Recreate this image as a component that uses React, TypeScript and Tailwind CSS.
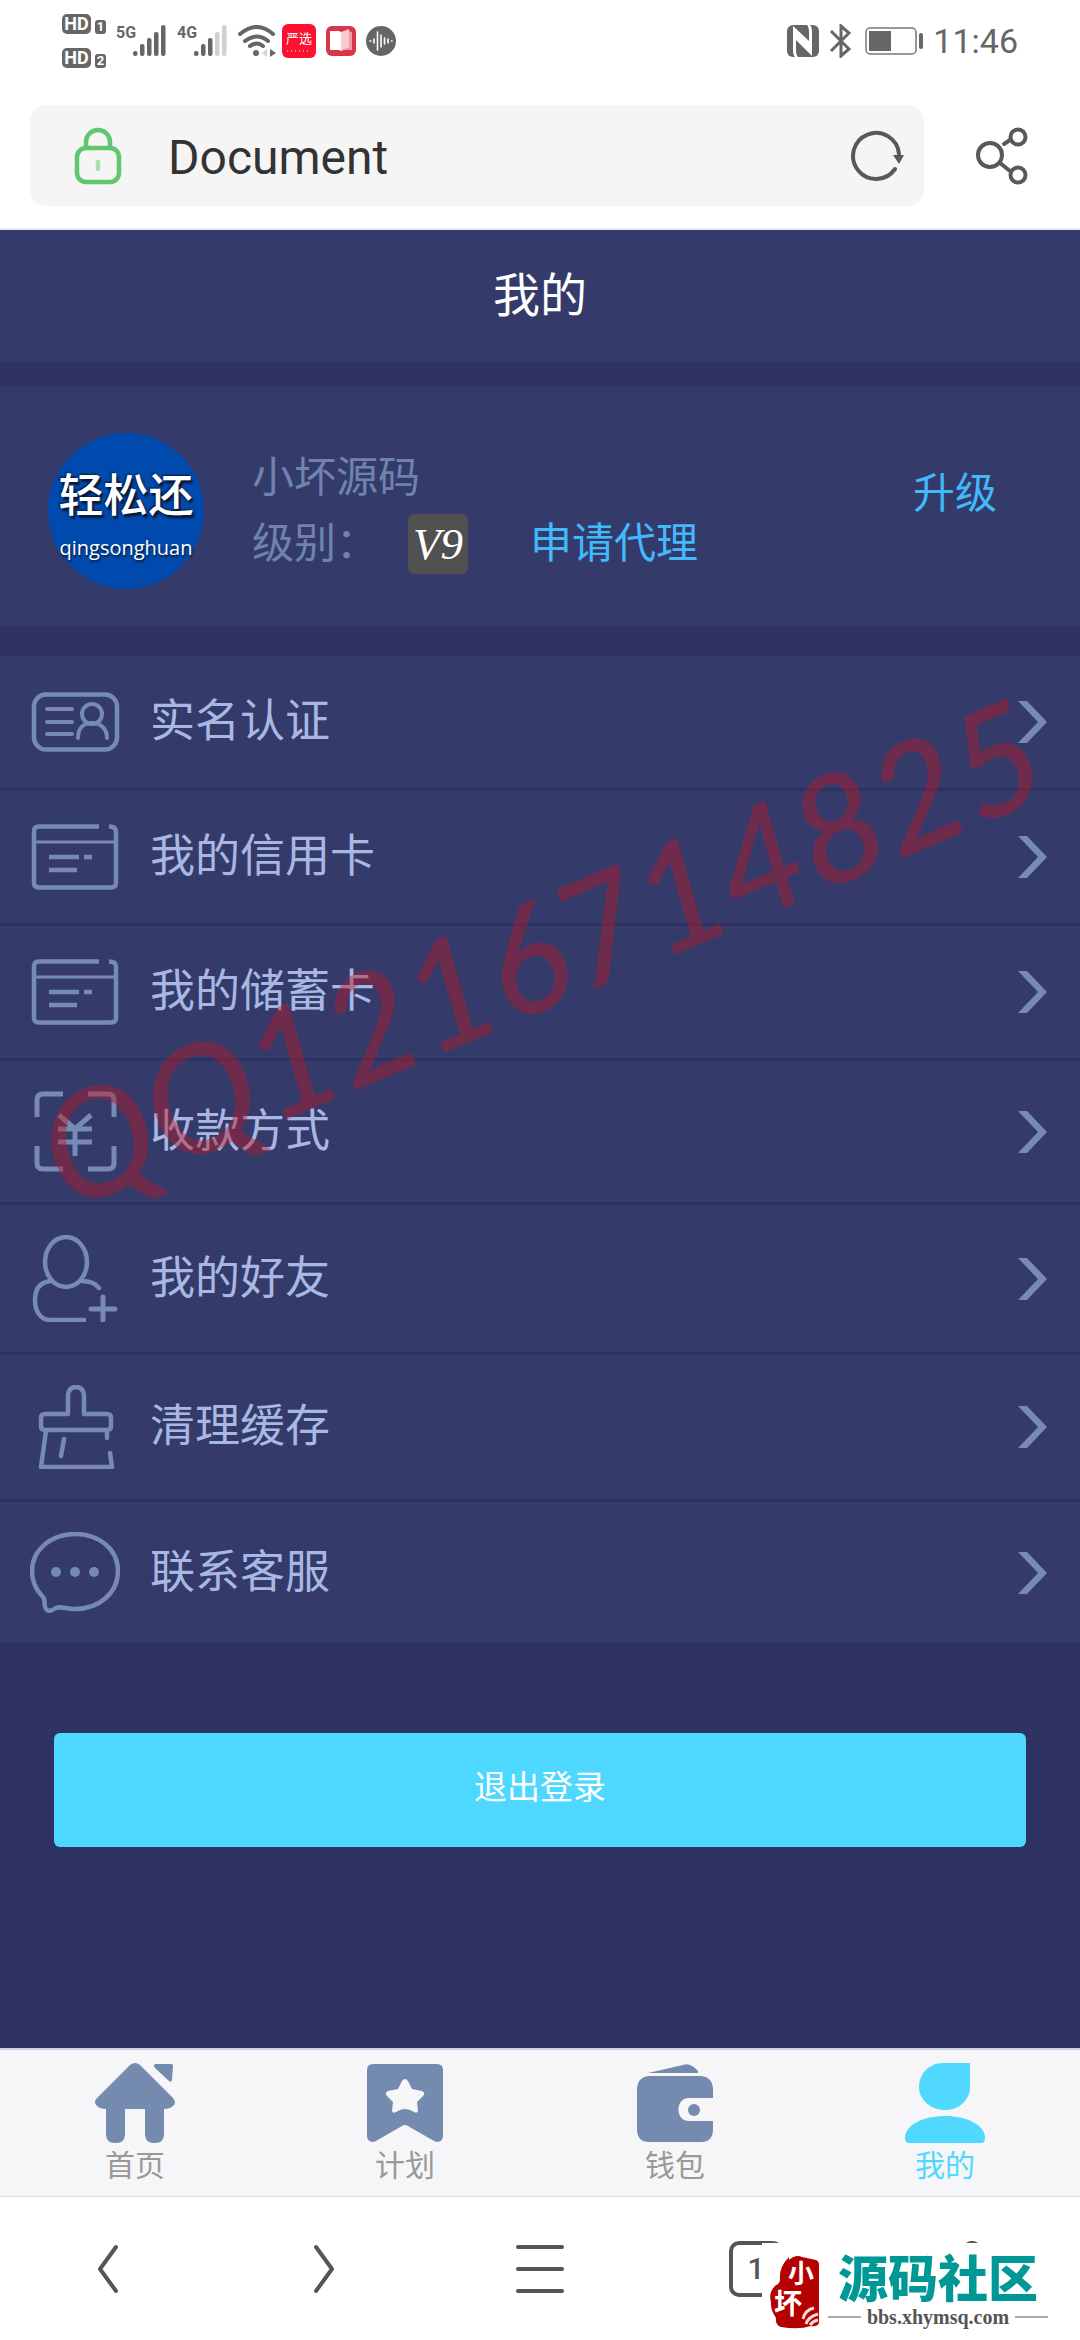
import type { ReactNode } from "react";

type IconProps = {
  height: number;
  children: ReactNode;
};

const MenuIcon = ({ height, children }: IconProps) => (
  <svg
    width="90"
    height={height}
    viewBox={`0 0 90 ${height}`}
    fill="none"
    stroke="#768ab3"
    strokeWidth="4.500"
    strokeLinecap="round"
    strokeLinejoin="round"
    aria-hidden="true"
  >
    {children}
  </svg>
);

const IdCardIcon = () => (
  <MenuIcon height={60}>
    <rect x="4" y="2.500" width="83" height="55" rx="12" />
    <path d="M17 17h25M17 30h25M17 42h25M48 46c0-10 6-15 14-15s15 5 15 15" strokeWidth="4" />
    <circle cx="62" cy="22" r="10" strokeWidth="4" />
  </MenuIcon>
);

const BankCardIcon = () => (
  <MenuIcon height={66}>
    <path
      d="M69 2.500H9q-5 0-5 5v51q0 5 5 5h72q5 0 5-5V7.500q0-5-7-5M19 33h30M54 33h8M19 46h28"
      strokeLinecap="butt"
    />
    <path d="M4 18h82" strokeWidth="3" />
  </MenuIcon>
);

const ReceiveIcon = () => (
  <MenuIcon height={81}>
    <path
      d="M33 3H13q-6 0-6 6v17M58 3h20q6 0 6 6v17M7 55v17q0 6 6 6h20M58 78h20q6 0 6-6V55M29 24l16 14 16-14M28 38h34M28 51h34M45 38v27"
      strokeLinecap="butt"
      strokeWidth="5"
    />
  </MenuIcon>
);

const FriendsIcon = () => (
  <MenuIcon height={87}>
    <ellipse cx="36" cy="27" rx="21" ry="25" />
    <path d="M21 46C9 47 5 55 5 65C5 77 11 85 20 85H54M52 46q12 0 17 7" />
    <path d="M61 74h24M73 62v23" strokeWidth="5" />
  </MenuIcon>
);

const BrushIcon = () => (
  <MenuIcon height={84}>
    <path d="M38 29V10q1-8 8-8t8 8v19h23q4 0 4 4v8q0 4-4 4H15q-4 0-4-4v-8q0-4 4-4zM16 46l-5 36h71l-2-14M77 46v7M34 54l-3 17" />
  </MenuIcon>
);

const ChatIcon = () => (
  <MenuIcon height={81}>
    <path d="M45 2C21 2 2 18 2 39c0 12 5 20 11 26c3 3 0 8 3 12c2 3 5 2 8 0c6-4 11 0 21 0c24 0 43-16 43-38S69 2 45 2z" />
    <g fill="#768ab3" stroke="none">
      <circle cx="26" cy="40" r="5" />
      <circle cx="45" cy="40" r="5" />
      <circle cx="64" cy="40" r="5" />
    </g>
  </MenuIcon>
);

const HomeTabIcon = () => (
  <svg width="80" height="80" viewBox="0 0 80 80" fill="currentColor" aria-hidden="true">
    <path d="M35 2q5-4 10 0l33 33q4 5 0 8-3 3-9 3v25q0 9-9 9h-1q-9 0-9-9V46H30v25q0 9-9 9h-1q-9 0-9-9V46q-6 0-9-3-4-4 0-8z" />
    <path d="M60 1h16q2 0 2 2l-1 14q-1 3-3 1L60 5q-2-3 0-4z" />
  </svg>
);

const PlanTabIcon = () => (
  <svg width="80" height="80" viewBox="0 0 80 80" fill="currentColor" aria-hidden="true">
    <path
      fillRule="evenodd"
      d="M8 1h64q6 0 6 6v67q-2 7-9 4L43 63q-3-2-6 0L11 78q-7 3-9-4V7q0-6 6-6zM37 18l-4 8-10 2q-4 2-1 5l6 6-1 9q1 3 4 1 9-6 18 0 3 2 4-1l-1-9 6-6q3-3-1-5l-10-2-4-8q-3-4-6 0z"
    />
  </svg>
);

const WalletTabIcon = () => (
  <svg width="80" height="80" viewBox="0 0 80 80" fill="currentColor" aria-hidden="true">
    <path d="M13 10L48 2q7-3 15 6v2z" />
    <path d="M14 13h52q12 1 12 14v8H54c-14 0-14 23 0 23h24v8q0 13-12 13H14Q2 79 2 66V27Q2 14 14 13z" />
    <circle cx="59" cy="47" r="6" />
  </svg>
);

const MineTabIcon = () => (
  <svg width="80" height="80" viewBox="0 0 80 80" fill="currentColor" aria-hidden="true">
    <path d="M38 0h27v24c0 13-11 23-25 23S14 37 14 24 24 0 38 0z" />
    <path d="M0 75c0-13 18-22 40-22s40 9 40 22q0 5-4 5H4q-4 0-4-5z" />
  </svg>
);

const menu = [
  { label: "实名认证", icon: <IdCardIcon /> },
  { label: "我的信用卡", icon: <BankCardIcon /> },
  { label: "我的储蓄卡", icon: <BankCardIcon /> },
  { label: "收款方式", icon: <ReceiveIcon /> },
  { label: "我的好友", icon: <FriendsIcon /> },
  { label: "清理缓存", icon: <BrushIcon /> },
  { label: "联系客服", icon: <ChatIcon /> },
];

const tabs = [
  { label: "首页", icon: <HomeTabIcon />, active: false },
  { label: "计划", icon: <PlanTabIcon />, active: false },
  { label: "钱包", icon: <WalletTabIcon />, active: false },
  { label: "我的", icon: <MineTabIcon />, active: true },
];

const SimBadge = ({ sim }: { sim: string }) => (
  <div className="flex items-end gap-1 font-bold text-white">
    <span className="w-[29px] h-5 rounded-[5px] bg-[#666] text-[18px] leading-5 text-center">
      HD
    </span>
    <span className="w-[11px] h-3.5 rounded-[3px] bg-[#666] text-[13px] leading-[14px] text-center">
      {sim}
    </span>
  </div>
);

const Signal = ({ network, bars }: { network: string; bars: number }) => (
  <div className="flex items-start h-8">
    <span className="w-[17px] text-[16px] leading-4 font-bold">{network}</span>
    <svg width="34" height="32" viewBox="0 0 34 32" aria-hidden="true">
      {[5, 12, 18, 24, 31].map((height, i) => (
        <rect
          key={height}
          x={i * 7}
          y={31 - height}
          width="4.500"
          height={height}
          rx="2"
          fill={i < bars ? "#666" : "#d0d0d0"}
        />
      ))}
    </svg>
  </div>
);

const StatusBar = () => (
  <div className="flex justify-between pt-3.5 pb-[37px] px-[62px] text-[#666]">
    <div className="flex items-center gap-2.5">
      <div className="flex flex-col gap-3.5">
        <SimBadge sim="1" />
        <SimBadge sim="2" />
      </div>
      <Signal network="5G" bars={5} />
      <Signal network="4G" bars={3} />
      <div className="flex items-center gap-1.5">
        <svg width="38" height="32" viewBox="0 0 38 32" fill="none" stroke="#666" strokeWidth="4" strokeLinecap="round" aria-hidden="true">
          <path d="M2 9q17-14 33 0M7 16q12-9 23 0M12 21q7-5 13 0" />
          <circle cx="18" cy="28" r="3" fill="#666" stroke="none" />
          <path d="M32 24l6 4-6 4z" fill="#666" stroke="none" />
          <path d="M29 24l-5 4 5 4z" fill="#d0d0d0" stroke="none" />
        </svg>
        <div className="w-[34px] h-[34px] rounded-md bg-[#fb1231] text-white text-[13px] leading-4 text-center flex flex-col items-center pt-[7px] gap-[3px]">
          严选
          <svg width="24" height="3" aria-hidden="true">
            <path d="M0 1h24" stroke="#fff" strokeWidth="1" strokeDasharray="1 3" />
          </svg>
        </div>
      </div>
      <svg width="30" height="30" viewBox="0 0 30 30" aria-hidden="true">
        <rect width="30" height="30" rx="6" fill="#d9364a" />
        <path d="M4 5h9l2 1v19l-2-1H4z" fill="#fff" />
        <path d="M15 6l8-3v19l-8 3z" fill="#f9ccd2" />
        <path d="M23 5l3 1v18H15l8-2z" fill="#f19ba6" />
      </svg>
      <svg width="30" height="30" viewBox="0 0 30 30" aria-hidden="true">
        <circle cx="15" cy="15" r="15" fill="#666" />
        <path
          d="M4 15h1M8 13v4M11.500 6v18M15 9v12M18.500 12v6M22 13v4M25.500 15h.5"
          stroke="#fff"
          strokeWidth="1.600"
          strokeLinecap="round"
        />
      </svg>
    </div>
    <div className="flex items-center gap-2.5">
      <svg width="32" height="32" viewBox="0 0 32 32" aria-hidden="true">
        <rect width="32" height="32" rx="6" fill="#666" />
        <path d="M8 32Q6 30 6 25V1L22 16V7Q22 2 20 0h3q2 2 2 7v24L9 15v10q0 5 2 7z" fill="#fff" />
      </svg>
      <svg width="22" height="34" viewBox="0 0 22 34" fill="none" stroke="#666" strokeWidth="3" aria-hidden="true">
        <path d="M2 7l18 18-8 7V2l8 7L2 27" />
      </svg>
      <svg width="58" height="28" viewBox="0 0 58 28" className="ml-1" aria-hidden="true">
        <rect x="1" y="1" width="50" height="26" rx="4" fill="none" stroke="#777" strokeWidth="1.500" />
        <rect x="4" y="4" width="22" height="20" fill="#666" />
        <rect x="54" y="6" width="4" height="16" rx="2" fill="#666" />
      </svg>
      <time className="text-[34px] leading-10">11:46</time>
    </div>
  </div>
);

const AddressBar = () => (
  <div className="flex items-center gap-[52px] pl-[30px] pr-[52px] pb-[22px] border-b-2 border-[#e8edf5]">
    <div className="flex flex-1 items-center h-[101px] rounded-2xl bg-[#f5f5f5] pl-11 pr-[18px]">
      <svg width="48" height="58" viewBox="0 0 48 58" fill="none" stroke="#62c66e" strokeWidth="4.500" aria-hidden="true">
        <rect x="3" y="21" width="42" height="34" rx="9" />
        <path d="M12 21V15a12 12 0 0 1 24 0v6" />
        <path d="M24 35v7" stroke="#a9dfb0" strokeLinecap="round" />
      </svg>
      <input
        type="text"
        aria-label="地址栏"
        defaultValue="Document"
        className="flex-1 min-w-0 ml-[46px] pt-1 bg-transparent text-5xl text-[#333] outline-none"
      />
      <button type="button" aria-label="刷新">
        <svg width="56" height="52" viewBox="0 0 56 52" fill="none" stroke="#595959" strokeWidth="4" strokeLinecap="round" aria-hidden="true">
          <path d="M45 39A23 23 0 1 1 49 24" />
          <path d="M43 25h11l-5 9z" fill="#595959" stroke="none" />
        </svg>
      </button>
    </div>
    <button type="button" aria-label="分享">
      <svg width="52" height="58" viewBox="0 0 52 58" fill="none" stroke="#595959" strokeWidth="4" strokeLinecap="round" aria-hidden="true">
        <circle cx="14" cy="28" r="12" />
        <circle cx="42" cy="10" r="7.500" />
        <circle cx="42" cy="48" r="7.500" />
        <path d="M28 17l6-4M24 36l10 8" />
      </svg>
    </button>
  </div>
);

const Profile = () => (
  <section className="flex items-center gap-12 bg-[#343b6b] pt-[47px] pb-[37px] pl-12 pr-[83px] text-[42px] leading-[66px]">
    <div className="flex flex-col items-center size-[156px] shrink-0 rounded-full bg-[#004aad] pt-9 text-white">
      <span className="text-[45px] leading-[56px] font-medium [text-shadow:2px_3px_2px_#0b1838,-1px_-1px_2px_#0b1838]">
        轻松还
      </span>
      <span className="font-['Open_Sans'] text-xl leading-[46px] [text-shadow:1px_2px_2px_#0b1838]">
        qingsonghuan
      </span>
    </div>
    <div className="flex-1 text-[#7083ae]">
      <p>小坏源码</p>
      <div className="flex items-center">
        <span>级别：</span>
        <span className="ml-[30px] size-[60px] rounded-md bg-[#505050] text-center text-white font-['Liberation_Serif'] italic text-[45px] leading-[60px]">
          V9
        </span>
        <a href="#agent" className="ml-[62px] text-[#41b9fb]">
          申请代理
        </a>
      </div>
    </div>
    <a href="#upgrade" className="self-start mt-7 text-[#41b9fb]">
      升级
    </a>
  </section>
);

const Menu = () => (
  <ul>
    {menu.map((item) => (
      <li key={item.label} className="border-b-3 border-[#2d3262]">
        <a
          href="#menu"
          className="flex items-center gap-[30px] bg-[#343b6b] py-[30px] pl-[30px] pr-[33px] text-[45px] leading-[72px] text-[#a9b8e3]"
        >
          {item.icon}
          <span className="flex-1">{item.label}</span>
          <svg width="29" height="42" viewBox="0 0 29 42" fill="#768ab3" aria-hidden="true">
            <path d="M0 0h9l20 21L9 42H0l20-21z" />
          </svg>
        </a>
      </li>
    ))}
  </ul>
);

const TabBar = () => (
  <nav className="grid grid-cols-4 bg-[#f6f6f9] border-t-2 border-[#cdd0e0] pt-[13px] pb-2">
    {tabs.map((tab) => (
      <a
        key={tab.label}
        href="#tab"
        className={`flex flex-col items-center ${tab.active ? "text-[#50d8ff]" : "text-[#758aaf]"}`}
      >
        {tab.icon}
        <span className={`text-[30px] leading-[45px] ${tab.active ? "text-[#50d8ff]" : "text-[#999]"}`}>
          {tab.label}
        </span>
      </a>
    ))}
  </nav>
);

const SiteMark = () => (
  <div className="absolute top-[46px] right-0 bottom-0 w-[318px] bg-white flex items-start gap-2 pt-3 pl-2">
    <svg width="50" height="74" viewBox="0 0 50 74" aria-hidden="true">
      <path
        d="M19 5q7-6 13-3l14 3q3 1 3 5v58q-2 4-8 3-12 4-30 1-6-2-5-9-6-9-5-16-3-10 5-17 4-1 4-6-1-12 9-22z"
        fill="#b40000"
      />
      <path d="M33 64q2-9 11-11M36 69q2-7 12-10M40 70q3-4 8-5" fill="none" stroke="#f6dada" strokeWidth="3" />
      <g fill="#fff" fontFamily="'Noto Sans CJK SC', sans-serif" fontWeight="700">
        <text x="18" y="28" fontSize="26">小</text>
        <text x="4" y="59" fontSize="28">坏</text>
      </g>
    </svg>
    <div className="flex flex-col items-center w-[220px]">
      <span className="text-[50px] leading-[50px] font-black text-[#009896]">源码社区</span>
      <div className="flex items-center gap-1.5 w-full font-['Liberation_Serif'] font-bold text-xl leading-6 text-[#555]">
        <span className="flex-1 h-0.5 bg-[#aaa]" />
        bbs.xhymsq.com
        <span className="flex-1 h-0.5 bg-[#aaa]" />
      </div>
    </div>
  </div>
);

const BrowserNav = () => (
  <footer className="relative grid grid-cols-5 items-center justify-items-center h-36 bg-white border-t border-[#ddd] text-[#555]">
    <button type="button" aria-label="后退">
      <svg width="22" height="50" viewBox="0 0 22 50" fill="none" stroke="currentColor" strokeWidth="4" strokeLinecap="round" strokeLinejoin="round">
        <path d="M19 3L3 25l16 22" />
      </svg>
    </button>
    <button type="button" aria-label="前进">
      <svg width="22" height="50" viewBox="0 0 22 50" fill="none" stroke="currentColor" strokeWidth="4" strokeLinecap="round" strokeLinejoin="round">
        <path d="M3 3l16 22L3 47" />
      </svg>
    </button>
    <button type="button" aria-label="菜单">
      <svg width="50" height="48" viewBox="0 0 50 48" fill="none" stroke="currentColor" strokeWidth="4" strokeLinecap="round">
        <path d="M3 2h44M3 24h44M3 46h44" />
      </svg>
    </button>
    <button type="button" className="w-[54px] h-14 rounded-[10px] border-4 border-[#555] text-[30px] leading-[48px] font-medium">
      1
    </button>
    <button type="button" aria-label="主页">
      <svg width="54" height="56" viewBox="0 0 54 56" fill="none" stroke="currentColor" strokeWidth="4" strokeLinejoin="round">
        <path d="M3 22L23 3q4-2 8 0l20 19v31H3z" />
      </svg>
    </button>
    <SiteMark />
  </footer>
);

export default function App() {
  return (
    <div className="min-h-screen flex flex-col bg-white font-[Roboto,'Noto_Sans_CJK_SC',sans-serif]">
      <StatusBar />
      <AddressBar />
      <main className="relative flex-1 overflow-hidden bg-[#2d3262]">
        <h1 className="bg-[#343b6b] py-[30px] text-center text-[47px] leading-[72px] text-white">
          我的
        </h1>
        <div className="mt-6 mb-[30px]">
          <Profile />
        </div>
        <Menu />
        <div className="px-[54px] pt-[87px] pb-12">
          <button
            type="button"
            className="w-full h-[114px] rounded-md bg-[#4fd8ff] pb-1 text-[33px] text-white"
          >
            退出登录
          </button>
        </div>
        <div className="absolute top-[720px] left-1/2 -translate-x-1/2 -translate-y-1/2 -rotate-[23deg] whitespace-nowrap font-[Lato] italic font-medium text-[148px] leading-none text-[#b81826]/45 pointer-events-none">
          QQ1216714825
        </div>
      </main>
      <TabBar />
      <BrowserNav />
    </div>
  );
}
